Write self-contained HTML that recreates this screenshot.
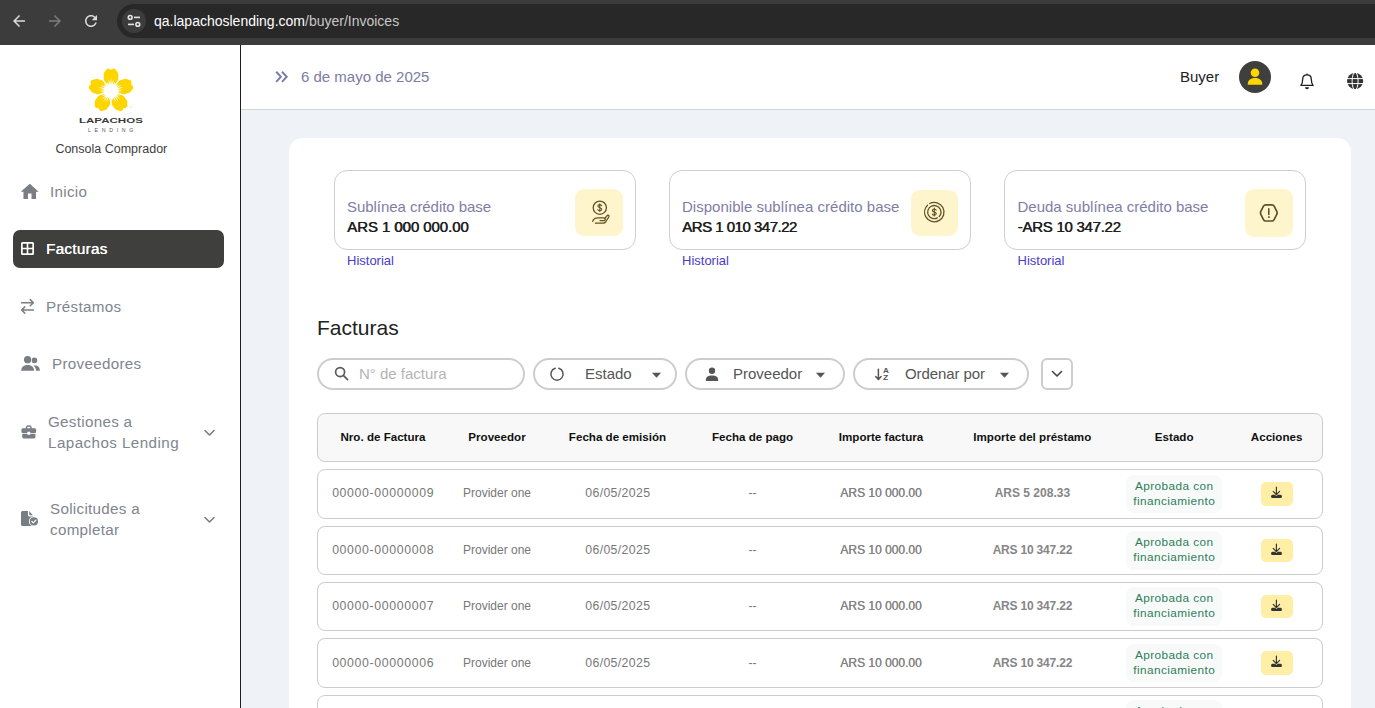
<!DOCTYPE html>
<html lang="es">
<head>
<meta charset="utf-8">
<title>Facturas - Lapachos Lending</title>
<style>
*{box-sizing:border-box;margin:0;padding:0}
html,body{width:1375px;height:708px;overflow:hidden;background:#fff}
body{font-family:"Liberation Sans",sans-serif;position:relative;color:#222}
.abs{position:absolute;white-space:nowrap}
svg{display:block;position:absolute;overflow:visible}
/* browser chrome */
#chrome{left:0;top:0;width:1375px;height:45px;background:#3c3c3c}
#pill{left:117px;top:4px;width:1300px;height:34px;border-radius:17px;background:#282828}
#tune{left:122px;top:9px;width:24px;height:24px;border-radius:12px;background:#3c3c3c}
#url{left:154px;top:12.4px;font-size:14px;line-height:18px;color:#fff;letter-spacing:0}
#url span{color:#c7c7c7}
/* sidebar */
#side{left:0;top:45px;width:240px;height:663px;background:#fff}
#sideline{left:240px;top:45px;width:1px;height:663px;background:#1f1f1f}
.nav{font-size:15.200px;line-height:21px;color:#80858e;letter-spacing:0.300px}
#active{left:13px;top:230px;width:211px;height:38px;border-radius:7px;background:#3f3f3d}
/* main */
#main{left:241px;top:45px;width:1134px;height:663px;background:#eff2f7}
#head{left:241px;top:45px;width:1134px;height:65px;background:#fff;border-bottom:1px solid #d4d4d4}
#card{left:289px;top:138px;width:1062px;height:600px;background:#fff;border-radius:14px}
.stat{top:170px;width:302px;height:80px;border:1px solid #cfcfcf;border-radius:13px;background:#fff}
.sq{top:189px;width:48px;height:47px;border-radius:9px;background:#fff5cc}
.lbl{font-size:15px;line-height:20px;color:#7e7ea5}
.val{font-size:15px;line-height:20px;color:#1e1e1e;text-shadow:0.550px 0 0 #1e1e1e}
.hist{font-size:13px;line-height:16px;color:#4a3cc9}
.pillf{top:358px;height:32px;border:2px solid #cdcdcd;border-radius:16px;background:#fff}
.ftxt{font-size:15px;line-height:20px;color:#555}
#thead{left:317px;top:413px;width:1006px;height:49px;border:1px solid #ccc;border-radius:8px;background:#f8f8f8}
.row{left:317px;width:1006px;height:49px;border:1px solid #ccc;border-radius:8px;background:#fff}
.th{font-size:11.600px;line-height:16px;font-weight:bold;color:#111;transform:translateX(-50%)}
.td{font-size:12px;line-height:16px;color:#777;transform:translateX(-50%)}
.num{font-size:12.300px;letter-spacing:0.650px}
.dat{font-size:12.300px;letter-spacing:0.350px}
.loan{font-weight:bold;color:#868686}
.l2{letter-spacing:-0.200px}
.imp{color:#828282;text-shadow:0.180px 0 0 #828282}
.b1{letter-spacing:0.300px}
.badge{left:1126px;width:96px;height:38px;border-radius:8px;background:#f7faf8}
.btxt{font-size:11.800px;line-height:15px;color:#2e7d59;letter-spacing:0.420px;transform:translateX(-50%)}
.dl{left:1261px;width:32px;height:24px;border-radius:5px;background:#ffeea5}
</style>
</head>
<body>
<div id="chrome" class="abs"></div>
<div id="pill" class="abs"></div>
<div id="tune" class="abs"></div>
<div id="url" class="abs">qa.lapachoslending.com<span>/buyer/Invoices</span></div>

<div id="side" class="abs"></div>
<div id="sideline" class="abs"></div>
<div id="main" class="abs"></div>
<div id="head" class="abs"></div>
<div id="card" class="abs"></div>

<!-- browser chrome icons -->
<svg style="left:10px;top:12px" width="18" height="18" viewBox="0 0 24 24"><path fill="#dcdcdc" d="M20 11H7.83l5.59-5.59L12 4l-8 8 8 8 1.41-1.41L7.83 13H20v-2z"/></svg>
<svg style="left:46px;top:12px" width="18" height="18" viewBox="0 0 24 24"><path fill="#7d7d7d" d="M12 4l-1.41 1.41L16.17 11H4v2h12.17l-5.58 5.59L12 20l8-8z"/></svg>
<svg style="left:82px;top:12px" width="18" height="18" viewBox="0 0 24 24"><path fill="#dcdcdc" d="M17.65 6.35C16.2 4.9 14.21 4 12 4c-4.42 0-7.99 3.58-7.99 8s3.57 8 7.99 8c3.73 0 6.84-2.55 7.73-6h-2.08c-.82 2.33-3.04 4-5.65 4-3.31 0-6-2.69-6-6s2.69-6 6-6c1.66 0 3.14.69 4.22 1.78L13 11h7V4l-2.35 2.350z"/></svg>
<svg style="left:127px;top:14px" width="14" height="14" viewBox="0 0 14 14" fill="none" stroke="#e6e6e6" stroke-width="1.6"><circle cx="3.2" cy="3.4" r="1.9"/><path d="M7 3.4h6"/><circle cx="10.8" cy="10.4" r="1.9"/><path d="M1 10.4h6"/></svg>

<!-- sidebar -->
<svg id="flower" style="left:87.900px;top:67.600px" width="46" height="46" viewBox="-23 -23 46 46"><g fill="#ffd500"><path transform="rotate(0)" d="M0 0L-5.700-8.300L-7.300-11.200L-7.300-17.500L-4.100-22.200L-1.300-22.200L0-21L1.300-22.200L4.100-22.200L7.300-17.500L7.300-11.200L5.700-8.300Z"/><path transform="rotate(72)" d="M0 0L-5.700-8.300L-7.300-11.200L-7.300-17.500L-4.100-22.200L-1.300-22.200L0-21L1.300-22.200L4.100-22.200L7.300-17.500L7.300-11.200L5.700-8.300Z"/><path transform="rotate(144)" d="M0 0L-5.700-8.300L-7.300-11.200L-7.300-17.500L-4.100-22.200L-1.300-22.200L0-21L1.300-22.200L4.100-22.200L7.300-17.500L7.300-11.200L5.700-8.300Z"/><path transform="rotate(216)" d="M0 0L-5.700-8.300L-7.300-11.200L-7.300-17.500L-4.100-22.200L-1.300-22.200L0-21L1.300-22.200L4.100-22.200L7.300-17.500L7.300-11.200L5.700-8.300Z"/><path transform="rotate(288)" d="M0 0L-5.700-8.300L-7.300-11.200L-7.300-17.500L-4.100-22.200L-1.300-22.200L0-21L1.300-22.200L4.100-22.200L7.300-17.500L7.300-11.200L5.700-8.300Z"/></g><polygon fill="#fff" points="0.00,-13.50 0.69,-6.56 2.60,-12.23 2.04,-6.28 4.27,-9.59 3.30,-5.72 9.11,-12.54 4.42,-4.90 7.80,-7.03 5.34,-3.88 10.83,-6.25 6.03,-2.68 12.84,-4.17 6.46,-1.37 12.43,-1.31 6.60,0.00 10.44,1.10 6.46,1.37 14.74,4.79 6.03,2.68 9.09,5.25 5.34,3.88 9.29,8.36 4.42,4.90 7.94,10.92 3.30,5.72 5.08,11.42 2.04,6.28 2.18,10.27 0.69,6.56 0.00,15.50 -0.69,6.56 -2.18,10.27 -2.04,6.28 -5.08,11.42 -3.30,5.72 -7.94,10.92 -4.42,4.90 -9.29,8.36 -5.34,3.88 -9.09,5.25 -6.03,2.68 -14.74,4.79 -6.46,1.37 -10.44,1.10 -6.60,0.00 -12.43,-1.31 -6.46,-1.37 -12.84,-4.17 -6.03,-2.68 -10.83,-6.25 -5.34,-3.88 -7.80,-7.03 -4.42,-4.90 -9.11,-12.54 -3.30,-5.72 -4.27,-9.59 -2.04,-6.28 -2.60,-12.23 -0.69,-6.56"/><path d="M0 0L10.58 -14.56M0 0L17.12 5.56M0 0L0.00 18.00M0 0L-17.12 5.56M0 0L-10.58 -14.56" stroke="#fff" stroke-width="1.100" fill="none"/><circle r="6.800" fill="#fff"/><circle cx="20.300" cy="15.800" r="0.900" fill="none" stroke="#ffd500" stroke-width="0.300"/></svg>
<div class="abs" id="lap" style="left:78.500px;top:115px;font-size:7.700px;line-height:12px;font-weight:bold;color:#3a3a3a;transform-origin:0 0;transform:scaleX(1.500)">LAPACHOS</div>
<div class="abs" id="len" style="left:88px;top:126px;font-size:5.200px;line-height:8px;color:#555;letter-spacing:3.700px">LENDING</div>
<div class="abs" id="cons" style="left:55.4px;top:141px;font-size:12.5px;line-height:16px;color:#3d3d3d">Consola Comprador</div>

<svg style="left:18.800px;top:181.200px" width="21.500" height="21.500" viewBox="0 0 24 24"><path fill="#797d84" d="M10 20v-6h4v6h5v-8h3L12 3 2 12h3v8z"/></svg>
<div class="abs nav" style="left:50px;top:181px">Inicio</div>

<div id="active" class="abs"></div>
<svg style="left:21px;top:242px" width="13" height="13" viewBox="0 0 13 13"><path fill="#fff" fill-rule="evenodd" d="M1.5 0h10A1.5 1.500 0 0 1 13 1.500v10a1.500 1.500 0 0 1-1.500 1.500h-10A1.500 1.500 0 0 1 0 11.500v-10A1.500 1.500 0 0 1 1.500 0zM1.700 1.700v4h4v-4zM7.300 1.700v4h4v-4zM1.700 7.300v4h4v-4zM7.300 7.300v4h4v-4z"/></svg>
<div class="abs nav" style="left:46px;top:238px;color:#fff;text-shadow:0.3px 0 0 #fff">Facturas</div>

<svg style="left:20px;top:298px" width="16" height="17" viewBox="20 298 16 17" fill="none" stroke="#797d84" stroke-width="1.500" stroke-linecap="round" stroke-linejoin="round"><path d="M21.600 302.700H33.400M30.200 299.600L33.400 302.700L30.200 305.800"/><path d="M33.400 310H21.600M24.800 306.900L21.600 310L24.800 313.100"/></svg>
<div class="abs nav" style="left:46px;top:296px">Préstamos</div>

<svg style="left:20px;top:355px" width="21" height="17" viewBox="20 355 21 17"><g fill="#797d84"><circle cx="34.400" cy="360.300" r="2.850"/><path d="M36 370.800C36 368.600 35.100 366.900 33.500 365.800C34 365.600 34.600 365.500 35.300 365.500C38.400 365.500 39.900 367.800 39.900 370.800Z"/><circle cx="27.600" cy="359.700" r="4.200" fill="#fff"/><circle cx="27.600" cy="359.700" r="3.650"/><path d="M21.200 370.800C21.200 367.400 23.500 365 27.650 365C31.800 365 34.100 367.400 34.100 370.800Z"/></g></svg>
<div class="abs nav" style="left:52px;top:353px">Proveedores</div>

<svg style="left:19.700px;top:423.300px" width="17.600" height="17.600" viewBox="0 0 24 24"><path fill="#797d84" d="M10 16v-1H3.010L3 19c0 1.110.890 2 2 2h14c1.110 0 2-.890 2-2v-4h-7v1h-4zm10-9h-4.010V5l-2-2h-4l-2 2v2H4c-1.100 0-2 .900-2 2v3c0 1.110.890 2 2 2h6v-2h4v2h6c1.100 0 2-.900 2-2V9c0-1.100-.900-2-2-2zm-6 0h-4V5h4v2z"/></svg>
<div class="abs nav" style="left:48px;top:411px">Gestiones a</div>
<div class="abs nav" style="left:48px;top:432px;letter-spacing:0.430px">Lapachos Lending</div>
<svg style="left:204px;top:429px" width="11" height="8" viewBox="0 0 11 8" fill="none" stroke="#797d84" stroke-width="1.6" stroke-linecap="round" stroke-linejoin="round"><path d="M1 1.500l4.500 4.500L10 1.500"/></svg>

<svg style="left:20px;top:510px" width="19" height="18" viewBox="0 0 19 18"><path fill="#797d84" d="M1 2.400A1.500 1.500 0 0 1 2.500 .900H8v4.100A1.500 1.500 0 0 0 9.500 6.500H13v8A1.500 1.500 0 0 1 11.500 16h-9A1.500 1.500 0 0 1 1 14.500zM9.200 1.100L12.800 5.300H10a.800.800 0 0 1-.800-.800z"/><circle cx="13.900" cy="11.400" r="5" fill="#fff"/><circle cx="13.900" cy="11.400" r="4.100" fill="#797d84"/><path d="M11.900 11.500l1.400 1.400 2.600-2.800" fill="none" stroke="#fff" stroke-width="1.200" stroke-linecap="round" stroke-linejoin="round"/></svg>
<div class="abs nav" style="left:50px;top:498px">Solicitudes a</div>
<div class="abs nav" style="left:50px;top:519px">completar</div>
<svg style="left:204px;top:516px" width="11" height="8" viewBox="0 0 11 8" fill="none" stroke="#797d84" stroke-width="1.6" stroke-linecap="round" stroke-linejoin="round"><path d="M1 1.500l4.500 4.500L10 1.500"/></svg>

<!-- header -->
<svg style="left:275px;top:70px" width="14" height="14" viewBox="275 70 14 14" fill="none" stroke="#7e7ea6" stroke-width="2" stroke-linecap="butt" stroke-linejoin="miter"><path d="M276.200 71.700l4.700 5.100-4.700 5.100M282 71.700l4.700 5.100-4.700 5.100"/></svg>
<div class="abs" style="left:301px;top:67px;font-size:15px;line-height:20px;color:#7c7ca4">6 de mayo de 2025</div>
<div class="abs" style="left:1180px;top:67px;font-size:15px;line-height:20px;color:#1d1d1d">Buyer</div>
<div class="abs" style="left:1239px;top:61px;width:32px;height:32px;border-radius:16px;background:#3f3f3d"></div>
<svg style="left:1245px;top:67px" width="20" height="20" viewBox="-10 -10 20 20"><circle cx="0" cy="-4.300" r="4.300" fill="#ffd600"/><path fill="#ffd600" d="M-7.300 7.700C-7.300 3.200-4.600 1 0 1S7.300 3.200 7.300 7.700z"/></svg>
<svg style="left:1299px;top:72px" width="16" height="18" viewBox="0 0 16 18"><path fill="none" stroke="#1f1f1f" stroke-width="1.300" stroke-linejoin="round" d="M8 2.900C5.200 2.900 3.700 4.700 3.700 7.200C3.700 9.700 3.300 11.600 1.900 13.400H14.100C12.700 11.600 12.300 9.700 12.300 7.200C12.300 4.700 10.800 2.900 8 2.900Z"/><path d="M8 .900L9 2.700H7z" fill="#1f1f1f"/><path d="M6 15.200a2 2 0 0 0 4 0z" fill="#1f1f1f"/></svg>
<svg id="globe" style="left:1347px;top:73px" width="16.200" height="16.200" viewBox="-8.100 -8.100 16.200 16.200"><circle r="8.100" fill="#333"/><g fill="none" stroke="#fff" stroke-width="1"><path d="M-9-2.500h18M-9 2.500h18"/><ellipse rx="3" ry="8.800"/></g></svg>

<!-- stat cards -->
<div class="abs stat" style="left:334px"></div>
<div class="abs stat" style="left:669px"></div>
<div class="abs stat" style="left:1004px"></div>
<div class="abs sq" style="left:575px;top:189px;height:47.200px"></div>
<div class="abs sq" style="left:911px;top:189.700px;width:47px;height:46.400px"></div>
<div class="abs sq" style="left:1245px;top:189px;height:48px"></div>
<div class="abs lbl" style="left:347px;top:197px;letter-spacing:-0.050px">Sublínea crédito base</div>
<div class="abs val" style="left:347px;top:217px;letter-spacing:-0.070px">ARS 1 000 000.00</div>
<div class="abs hist" style="left:347px;top:253px">Historial</div>
<div class="abs lbl" style="left:682px;top:197px;letter-spacing:0.020px">Disponible sublínea crédito base</div>
<div class="abs val" style="left:682px;top:217px;letter-spacing:-0.500px">ARS 1 010 347.22</div>
<div class="abs hist" style="left:682px;top:253px">Historial</div>
<div class="abs lbl" style="left:1017.500px;top:197px">Deuda sublínea crédito base</div>
<div class="abs val" style="left:1017.500px;top:217px;letter-spacing:-0.270px">-ARS 10 347.22</div>
<div class="abs hist" style="left:1017.500px;top:253px">Historial</div>

<!-- stat icons -->
<svg id="ic1" style="left:589px;top:200px" width="22" height="26" viewBox="589 200 22 26" fill="none" stroke="#5e5326" stroke-width="1.300" stroke-linecap="round" stroke-linejoin="round"><circle cx="599.800" cy="207.700" r="6.600"/><path d="M601.700 205.800c-.300-.800-1-1.200-1.900-1.200-1.100 0-1.900.600-1.900 1.500s.700 1.300 1.900 1.600 1.900.700 1.900 1.600-.800 1.500-1.900 1.500c-1 0-1.700-.400-2-1.200M599.800 203.900v7.600" stroke-width="1.100"/><path d="M592.700 221.300C593.500 218.600 595.600 217.900 598 217.900L603.600 217.900Q605.300 217.900 605.300 219.250Q605.300 220.600 603.600 220.600L600 220.600"/><path d="M595.300 223.100L603.300 223.100Q604.800 223.100 605.600 222L608.800 217Q609.400 215.900 608.500 215.400Q607.600 215 606.900 215.900L604.900 218.400"/></svg>
<svg id="ic2" style="left:922px;top:200px" width="24" height="24" viewBox="922 200 24 24" fill="none" stroke="#5e5326" stroke-width="1.300" stroke-linecap="round" stroke-linejoin="round"><circle cx="934.300" cy="212.100" r="9.700" stroke-dasharray="57.75 3.200" transform="rotate(-118 934.300 212.100)"/><circle cx="934.300" cy="212.100" r="6.600" stroke-dasharray="38.87 2.600" transform="rotate(62 934.300 212.100)"/><path d="M936.200 210.200c-.300-.800-1-1.200-1.900-1.200-1.100 0-1.900.600-1.900 1.500s.700 1.300 1.900 1.600 1.900.700 1.900 1.600-.800 1.500-1.900 1.500c-1 0-1.700-.400-2-1.200M934.300 208.100v8" stroke-width="1.100"/></svg>
<svg id="ic3" style="left:1257px;top:201px" width="24" height="24" viewBox="1257 201 24 24" fill="none" stroke="#5e5326" stroke-width="1.700" stroke-linecap="round" stroke-linejoin="round"><path d="M1276.78 211.47Q1277.50 212.90 1276.78 214.33L1274.12 219.57Q1273.40 221.00 1271.80 221.00L1265.80 221.00Q1264.20 221.00 1263.48 219.57L1260.82 214.33Q1260.10 212.90 1260.82 211.47L1263.48 206.23Q1264.20 204.80 1265.80 204.80L1271.80 204.80Q1273.40 204.80 1274.12 206.23Z"/><path d="M1268.800 208.900v5.600" stroke-width="1.600"/><circle cx="1268.800" cy="217.100" r="0.550" fill="#5e5326" stroke-width="0.700"/></svg>

<!-- title -->
<div class="abs" style="left:317px;top:315px;font-size:21px;line-height:26px;color:#222">Facturas</div>

<!-- filters -->
<div class="abs pillf" style="left:317px;width:208px"></div>
<div class="abs pillf" style="left:533px;width:144px"></div>
<div class="abs pillf" style="left:685px;width:160px"></div>
<div class="abs pillf" style="left:853px;width:176px"></div>
<div class="abs" style="left:1041px;top:358px;width:32px;height:32px;border:2px solid #cdcdcd;border-radius:6px;background:#fff"></div>
<svg style="left:333.500px;top:366px" width="15" height="15" viewBox="0 0 16 16" fill="none" stroke="#5a5a5a" stroke-width="1.800" stroke-linecap="round"><circle cx="6.500" cy="6.500" r="4.800"/><path d="M10.200 10.200L14.500 14.500"/></svg>
<div class="abs ftxt" style="left:359px;top:364px;color:#b4b4b4">N° de factura</div>
<svg style="left:549px;top:366px" width="16" height="16" viewBox="0 0 16 16" fill="none" stroke="#555" stroke-width="1.500" stroke-linecap="round"><path d="M6.200 2.200A6.100 6.100 0 1 0 9.800 2.200"/></svg>
<div class="abs ftxt" style="left:585px;top:364px">Estado</div>
<svg style="left:650.500px;top:372px" width="11" height="6.500" viewBox="0 0 10 6"><path fill="#555" d="M.800 .600h8.400L5 5.300z"/></svg>
<svg style="left:704.500px;top:366.500px" width="14" height="15" viewBox="0 0 15 16"><circle cx="7.500" cy="4" r="3.400" fill="#555"/><path fill="#555" d="M1 15v-1.800c0-2.400 2.700-4 6.500-4s6.500 1.600 6.500 4V15z"/></svg>
<div class="abs ftxt" style="left:733px;top:364px">Proveedor</div>
<svg style="left:814.500px;top:372px" width="11" height="6.500" viewBox="0 0 10 6"><path fill="#555" d="M.800 .600h8.400L5 5.300z"/></svg>
<svg style="left:874px;top:367px" width="10" height="15" viewBox="874 367 10 15" fill="none" stroke="#555" stroke-width="1.500" stroke-linecap="round" stroke-linejoin="round"><path d="M878.400 369.200V379.300M875.700 376.500L878.400 379.400L881.100 376.500"/></svg>
<div class="abs" style="left:882.600px;top:367.100px;font-size:6.700px;line-height:8px;font-weight:bold;color:#555;transform-origin:0 0;transform:scaleX(1.220)">A</div>
<div class="abs" style="left:882.900px;top:373.500px;font-size:6.700px;line-height:8px;font-weight:bold;color:#555;transform-origin:0 0;transform:scaleX(1.280)">Z</div>
<div class="abs ftxt" style="left:905px;top:364px;letter-spacing:-0.100px">Ordenar por</div>
<svg style="left:998.500px;top:372px" width="11" height="6.500" viewBox="0 0 10 6"><path fill="#555" d="M.800 .600h8.400L5 5.300z"/></svg>
<svg style="left:1051px;top:370px" width="12" height="8" viewBox="0 0 12 8" fill="none" stroke="#444" stroke-width="1.600" stroke-linecap="round" stroke-linejoin="round"><path d="M1.500 1.500L6 6l4.500-4.500"/></svg>

<!-- table header -->
<div id="thead" class="abs"></div>
<div class="abs th" style="left:383px;top:429px">Nro. de Factura</div>
<div class="abs th" style="left:497px;top:429px">Proveedor</div>
<div class="abs th" style="left:617.500px;top:429px">Fecha de emisión</div>
<div class="abs th" style="left:752.500px;top:429px">Fecha de pago</div>
<div class="abs th" style="left:881px;top:429px">Importe factura</div>
<div class="abs th" style="left:1032.300px;top:429px">Importe del préstamo</div>
<div class="abs th" style="left:1174.200px;top:429px">Estado</div>
<div class="abs th" style="left:1276.600px;top:429px">Acciones</div>
<!-- row 1 -->
<div class="abs row" style="top:469px;height:50px"></div>
<div class="abs td num" style="left:383.200px;top:485.0px">00000-00000009</div>
<div class="abs td" style="left:497px;top:485.0px">Provider one</div>
<div class="abs td dat" style="left:617.800px;top:485.0px">06/05/2025</div>
<div class="abs td" style="left:752.500px;top:485.0px">--</div>
<div class="abs td imp" style="left:881px;top:485.0px">ARS 10 000.00</div>
<div class="abs td loan" style="left:1032.400px;top:485.0px">ARS 5 208.33</div>
<div class="abs badge" style="top:475px;height:38px"></div>
<div class="abs btxt b1" style="left:1174.200px;top:479.2px">Aprobada con</div>
<div class="abs btxt" style="left:1174.200px;top:494.2px">financiamiento</div>
<div class="abs dl" style="top:482px;height:24px"></div>
<svg style="left:1270px;top:486.0px" width="14" height="14" viewBox="1270 486 14 14"><path d="M1276.400 487v7.400M1273.200 491.300l3.200 3.300 3.200-3.300" fill="none" stroke="#333" stroke-width="1.150" stroke-linecap="round" stroke-linejoin="round"/><path fill="#333" d="M1272.600 494.800h2.400l1.400 1.300 1.400-1.300h2.600a1.600 1.600 0 0 1 0 3.200h-7.800a1.600 1.600 0 0 1 0-3.200z"/></svg>
<!-- row 2 -->
<div class="abs row" style="top:526px;height:49px"></div>
<div class="abs td num" style="left:383.200px;top:541.5px">00000-00000008</div>
<div class="abs td" style="left:497px;top:541.5px">Provider one</div>
<div class="abs td dat" style="left:617.800px;top:541.5px">06/05/2025</div>
<div class="abs td" style="left:752.500px;top:541.5px">--</div>
<div class="abs td imp" style="left:881px;top:541.5px">ARS 10 000.00</div>
<div class="abs td loan l2" style="left:1032.400px;top:541.5px">ARS 10 347.22</div>
<div class="abs badge" style="top:531px;height:39px"></div>
<div class="abs btxt b1" style="left:1174.200px;top:535.2px">Aprobada con</div>
<div class="abs btxt" style="left:1174.200px;top:550.2px">financiamiento</div>
<div class="abs dl" style="top:539px;height:23px"></div>
<svg style="left:1270px;top:542.5px" width="14" height="14" viewBox="1270 486 14 14"><path d="M1276.400 487v7.400M1273.200 491.300l3.200 3.300 3.200-3.300" fill="none" stroke="#333" stroke-width="1.150" stroke-linecap="round" stroke-linejoin="round"/><path fill="#333" d="M1272.600 494.800h2.400l1.400 1.300 1.400-1.300h2.600a1.600 1.600 0 0 1 0 3.200h-7.800a1.600 1.600 0 0 1 0-3.200z"/></svg>
<!-- row 3 -->
<div class="abs row" style="top:582px;height:49px"></div>
<div class="abs td num" style="left:383.200px;top:598.0px">00000-00000007</div>
<div class="abs td" style="left:497px;top:598.0px">Provider one</div>
<div class="abs td dat" style="left:617.800px;top:598.0px">06/05/2025</div>
<div class="abs td" style="left:752.500px;top:598.0px">--</div>
<div class="abs td imp" style="left:881px;top:598.0px">ARS 10 000.00</div>
<div class="abs td loan l2" style="left:1032.400px;top:598.0px">ARS 10 347.22</div>
<div class="abs badge" style="top:587px;height:39px"></div>
<div class="abs btxt b1" style="left:1174.200px;top:591.4px">Aprobada con</div>
<div class="abs btxt" style="left:1174.200px;top:606.4px">financiamiento</div>
<div class="abs dl" style="top:595px;height:23px"></div>
<svg style="left:1270px;top:598.5px" width="14" height="14" viewBox="1270 486 14 14"><path d="M1276.400 487v7.400M1273.200 491.300l3.200 3.300 3.200-3.300" fill="none" stroke="#333" stroke-width="1.150" stroke-linecap="round" stroke-linejoin="round"/><path fill="#333" d="M1272.600 494.800h2.400l1.400 1.300 1.400-1.300h2.600a1.600 1.600 0 0 1 0 3.200h-7.800a1.600 1.600 0 0 1 0-3.200z"/></svg>
<!-- row 4 -->
<div class="abs row" style="top:638px;height:50px"></div>
<div class="abs td num" style="left:383.200px;top:654.5px">00000-00000006</div>
<div class="abs td" style="left:497px;top:654.5px">Provider one</div>
<div class="abs td dat" style="left:617.800px;top:654.5px">06/05/2025</div>
<div class="abs td" style="left:752.500px;top:654.5px">--</div>
<div class="abs td imp" style="left:881px;top:654.5px">ARS 10 000.00</div>
<div class="abs td loan l2" style="left:1032.400px;top:654.5px">ARS 10 347.22</div>
<div class="abs badge" style="top:644px;height:38px"></div>
<div class="abs btxt b1" style="left:1174.200px;top:648.3px">Aprobada con</div>
<div class="abs btxt" style="left:1174.200px;top:663.3px">financiamiento</div>
<div class="abs dl" style="top:651px;height:24px"></div>
<svg style="left:1270px;top:655.0px" width="14" height="14" viewBox="1270 486 14 14"><path d="M1276.400 487v7.400M1273.200 491.300l3.200 3.300 3.200-3.300" fill="none" stroke="#333" stroke-width="1.150" stroke-linecap="round" stroke-linejoin="round"/><path fill="#333" d="M1272.600 494.800h2.400l1.400 1.300 1.400-1.300h2.600a1.600 1.600 0 0 1 0 3.200h-7.800a1.600 1.600 0 0 1 0-3.200z"/></svg>
<!-- row 5 -->
<div class="abs row" style="top:695px;height:50px"></div>
<div class="abs td num" style="left:383.200px;top:711.0px">00000-00000005</div>
<div class="abs td" style="left:497px;top:711.0px">Provider one</div>
<div class="abs td dat" style="left:617.800px;top:711.0px">06/05/2025</div>
<div class="abs td" style="left:752.500px;top:711.0px">--</div>
<div class="abs td imp" style="left:881px;top:711.0px">ARS 10 000.00</div>
<div class="abs td loan l2" style="left:1032.400px;top:711.0px">ARS 10 347.22</div>
<div class="abs badge" style="top:700px;height:38px"></div>
<div class="abs btxt b1" style="left:1174.200px;top:703.8px">Aprobada con</div>
<div class="abs btxt" style="left:1174.200px;top:719.8px">financiamiento</div>
<div class="abs dl" style="top:708px;height:24px"></div>
<svg style="left:1270px;top:712.0px" width="14" height="14" viewBox="1270 486 14 14"><path d="M1276.400 487v7.400M1273.200 491.300l3.200 3.300 3.200-3.300" fill="none" stroke="#333" stroke-width="1.150" stroke-linecap="round" stroke-linejoin="round"/><path fill="#333" d="M1272.600 494.800h2.400l1.400 1.300 1.400-1.300h2.600a1.600 1.600 0 0 1 0 3.200h-7.800a1.600 1.600 0 0 1 0-3.200z"/></svg>
</body>
</html>
